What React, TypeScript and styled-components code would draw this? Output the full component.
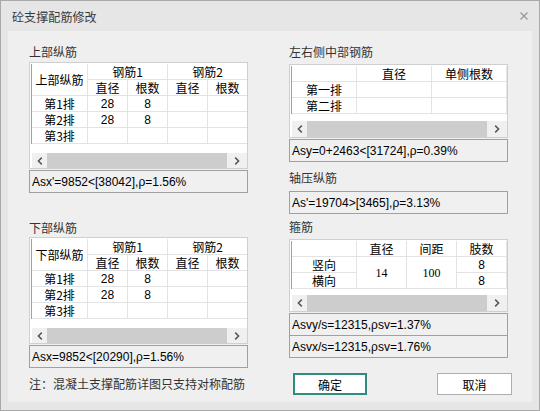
import React from 'react'
import styled, { createGlobalStyle } from 'styled-components'

const GlobalStyle = createGlobalStyle`
  html, body {
    margin: 0;
    padding: 0;
    background: #ffffff;
  }
  body {
    font-family: 'Noto Sans CJK SC', 'Liberation Sans', sans-serif;
    font-size: 12px;
  }
  * {
    box-sizing: border-box;
  }
`

const Window = styled.div`
  width: 540px;
  height: 411px;
  border: 1px solid #a9a9a9;
  background: #e6e6e6;
  display: flex;
  flex-direction: column;
`

const TitleBar = styled.div`
  height: 30px;
  flex-shrink: 0;
  display: flex;
  align-items: center;
  justify-content: space-between;
  padding: 0 11px 0 11px;
  color: #3a3a3a;
  font-size: 12px;
  letter-spacing: 0.1px;
`

const Client = styled.div`
  flex: 1;
  margin: 0 7px 8px;
  background: #efefef;
  display: flex;
  gap: 41px;
  padding: 14px 0 0 21px;
`

const Column = styled.div`
  width: 219px;
  display: flex;
  flex-direction: column;
`

const Label = styled.div<{ $mt?: number; $mb?: number }>`
  height: 14px;
  line-height: 14px;
  color: #333333;
  font-size: 12px;
  margin-top: ${({ $mt }) => $mt ?? 0}px;
  margin-bottom: ${({ $mb }) => $mb ?? 0}px;
  white-space: nowrap;
`

const GridBox = styled.div<{ $h: number }>`
  height: ${({ $h }) => $h}px;
  border: 1px solid #cfcfcf;
  background: #ffffff;
  padding: 1px 0 0 1px;
  display: flex;
  flex-direction: column;
  overflow: hidden;
`

const Grid = styled.div<{ $cols: string }>`
  display: grid;
  grid-template-columns: ${({ $cols }) => $cols};
  grid-auto-rows: 16px;
  border-left: 1px solid #a0a0a0;
  width: max-content;
`

const Cell = styled.div<{ $cs?: number; $rs?: number; $font?: 'cjk' | 'sans' | 'serif' }>`
  grid-column: span ${({ $cs }) => $cs ?? 1};
  grid-row: span ${({ $rs }) => $rs ?? 1};
  border-right: 1px solid #e3e3e3;
  border-bottom: 1px solid #e3e3e3;
  display: flex;
  align-items: center;
  justify-content: center;
  color: #000000;
  font-size: 12px;
  line-height: 14px;
  white-space: nowrap;
  font-family: ${({ $font }) =>
    $font === 'sans'
      ? "'Liberation Sans', sans-serif"
      : $font === 'serif'
        ? "'Liberation Serif', serif"
        : "'Noto Sans CJK SC', sans-serif"};
`

const Spacer = styled.div`
  flex: 1;
`

const ScrollBar = styled.div<{ $h: number }>`
  height: ${({ $h }) => $h}px;
  margin-left: 1px;
  display: flex;
  background: #f0f0f0;
  flex-shrink: 0;
`

const ScrollButton = styled.div<{ $w: number }>`
  width: ${({ $w }) => $w}px;
  flex-shrink: 0;
  display: flex;
  align-items: center;
  justify-content: center;
`

const Thumb = styled.div`
  flex: 1;
  background: #cdcdcd;
`

const StatusBox = styled.div<{ $h?: number; $mt?: number; $joined?: boolean }>`
  height: ${({ $h }) => $h ?? 23}px;
  margin-top: ${({ $mt }) => $mt ?? 0}px;
  border: 1px solid #a0a0a0;
  border-top: ${({ $joined }) => ($joined ? 'none' : '1px solid #a0a0a0')};
  background: #f0f0f0;
  padding-left: 2px;
  display: flex;
  align-items: center;
  font-family: 'Liberation Sans', sans-serif;
  font-size: 12px;
  color: #000000;
  white-space: nowrap;
`

const Note = styled.div`
  margin-top: 9px;
  height: 14px;
  line-height: 14px;
  color: #333333;
  font-size: 12px;
  white-space: nowrap;
`

const ButtonRow = styled.div`
  margin-top: 15px;
  margin-right: -4px;
  padding-left: 4px;
  display: flex;
  justify-content: space-between;
`

const Button = styled.div<{ $primary?: boolean }>`
  width: ${({ $primary }) => ($primary ? 74 : 75)}px;
  height: 22px;
  background: #ffffff;
  border: ${({ $primary }) => ($primary ? '2px solid #2f8b7e' : '1px solid #adadad')};
  display: flex;
  align-items: center;
  justify-content: center;
  color: #000000;
  font-size: 12px;
`

type CellDef = { t: string; cs?: number; rs?: number; f?: 'cjk' | 'sans' | 'serif' }

const Chevron = ({ dir }: { dir: 'left' | 'right' }) => (
  <svg width="6" height="8" viewBox="0 0 6 8">
    <path
      d={dir === 'left' ? 'M4.8 0.6 L1.4 4 L4.8 7.4' : 'M1.2 0.6 L4.6 4 L1.2 7.4'}
      fill="none"
      stroke="#555555"
      strokeWidth="1.5"
    />
  </svg>
)

const CloseIcon = () => (
  <svg width="8" height="8" viewBox="0 0 8 8">
    <path d="M0.5 0.5 L7.5 7.5 M7.5 0.5 L0.5 7.5" stroke="#9a9a9a" strokeWidth="1.3" />
  </svg>
)

const TableBox = ({ h, cols, cells, scrollH = 16 }: { h: number; cols: string; cells: CellDef[]; scrollH?: number }) => (
  <GridBox $h={h}>
    <Grid $cols={cols}>
      {cells.map((c, i) => (
        <Cell key={i} $cs={c.cs} $rs={c.rs} $font={c.f}>
          {c.t}
        </Cell>
      ))}
    </Grid>
    <Spacer />
    <ScrollBar $h={scrollH}>
      <ScrollButton $w={15}>
        <Chevron dir="left" />
      </ScrollButton>
      <Thumb />
      <ScrollButton $w={20}>
        <Chevron dir="right" />
      </ScrollButton>
    </ScrollBar>
  </GridBox>
)

const longCells = (head: string): CellDef[] => [
  { t: head, rs: 2 },
  { t: '钢筋1', cs: 2 },
  { t: '钢筋2', cs: 2 },
  { t: '直径' },
  { t: '根数' },
  { t: '直径' },
  { t: '根数' },
  { t: '第1排' },
  { t: '28', f: 'sans' },
  { t: '8', f: 'sans' },
  { t: '' },
  { t: '' },
  { t: '第2排' },
  { t: '28', f: 'sans' },
  { t: '8', f: 'sans' },
  { t: '' },
  { t: '' },
  { t: '第3排' },
  { t: '' },
  { t: '' },
  { t: '' },
  { t: '' },
]

const sideCells: CellDef[] = [
  { t: '' },
  { t: '直径' },
  { t: '单侧根数' },
  { t: '第一排' },
  { t: '' },
  { t: '' },
  { t: '第二排' },
  { t: '' },
  { t: '' },
]

const stirrupCells: CellDef[] = [
  { t: '' },
  { t: '直径' },
  { t: '间距' },
  { t: '肢数' },
  { t: '竖向' },
  { t: '14', rs: 2, f: 'serif' },
  { t: '100', rs: 2, f: 'serif' },
  { t: '8', f: 'sans' },
  { t: '横向' },
  { t: '8', f: 'sans' },
]

const LONG_COLS = '56px 40px 40px 40px 40px'

export default function App() {
  return (
    <>
      <GlobalStyle />
      <Window>
        <TitleBar>
          <span>砼支撑配筋修改</span>
          <CloseIcon />
        </TitleBar>
        <Client>
          <Column>
            <Label $mb={3}>上部纵筋</Label>
            <TableBox h={107} cols={LONG_COLS} cells={longCells('上部纵筋')} scrollH={15} />
            <StatusBox $mt={1}>Asx'=9852&lt;[38042],ρ=1.56%</StatusBox>

            <Label $mt={28} $mb={2}>下部纵筋</Label>
            <TableBox h={107} cols={LONG_COLS} cells={longCells('下部纵筋')} scrollH={15} />
            <StatusBox $mt={1}>Asx=9852&lt;[20290],ρ=1.56%</StatusBox>

            <Note>注：混凝土支撑配筋详图只支持对称配筋</Note>
          </Column>

          <Column>
            <Label $mb={5}>左右侧中部钢筋</Label>
            <TableBox h={74} cols="65px 75px 75px" cells={sideCells} />
            <StatusBox $mt={1}>Asy=0+2463&lt;[31724],ρ=0.39%</StatusBox>

            <Label $mt={9} $mb={6}>轴压纵筋</Label>
            <StatusBox>As'=19704&gt;[3465],ρ=3.13%</StatusBox>

            <Label $mt={6} $mb={5}>箍筋</Label>
            <TableBox h={73} cols="65px 50px 50px 50px" cells={stirrupCells} />
            <StatusBox $mt={1}>Asvy/s=12315,ρsv=1.37%</StatusBox>
            <StatusBox $joined $h={22}>Asvx/s=12315,ρsv=1.76%</StatusBox>

            <ButtonRow>
              <Button $primary>确定</Button>
              <Button>取消</Button>
            </ButtonRow>
          </Column>
        </Client>
      </Window>
    </>
  )
}
